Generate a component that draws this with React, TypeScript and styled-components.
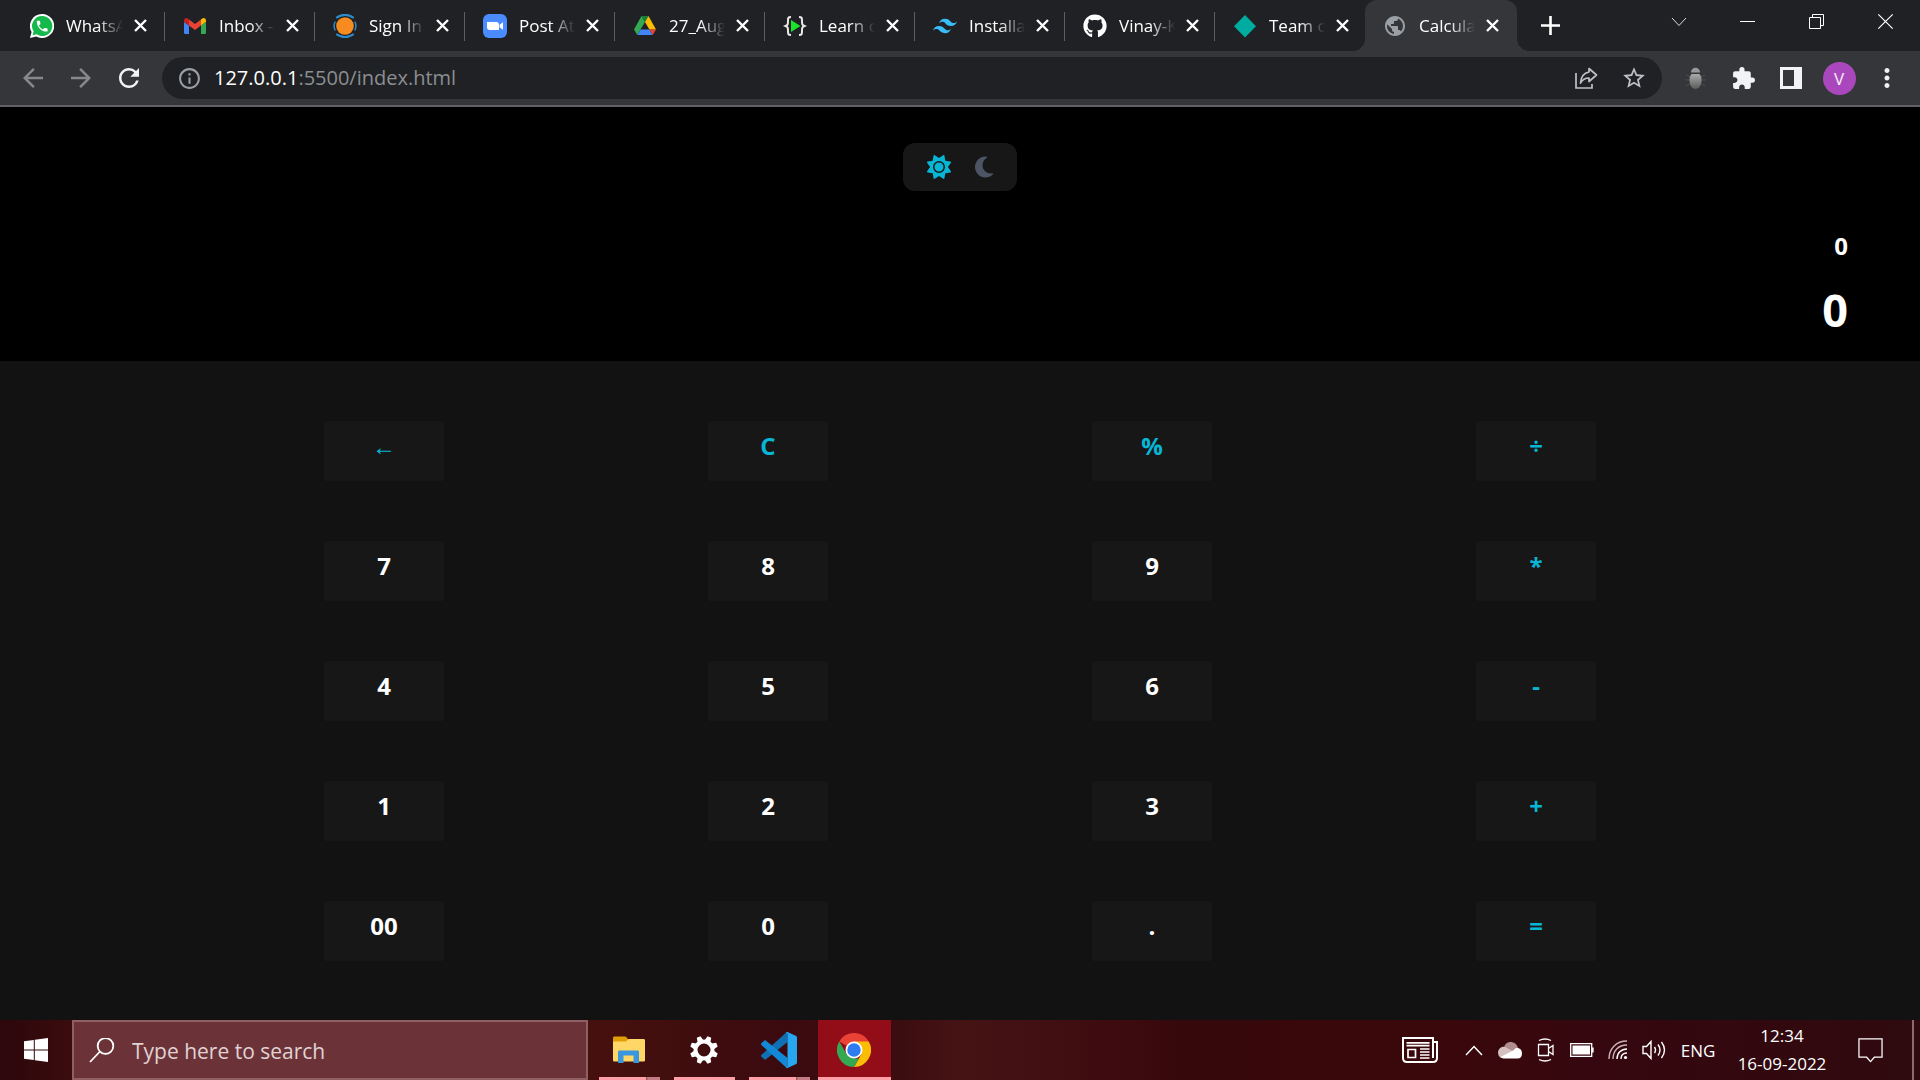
import React, { useState } from "react";
import styled, { createGlobalStyle, css } from "styled-components";
import { MdExtension, MdInfoOutline, MdPublic, MdRefresh, MdStarOutline, MdArrowBack, MdArrowForward, MdMoreVert } from "react-icons/md";
import { FaGithub, FaMoon, FaSun } from "react-icons/fa6";
import { SiTailwindcss } from "react-icons/si";

const uiFont = `"Segoe UI", "Open Sans", "Noto Sans", sans-serif`;

const GlobalStyle = createGlobalStyle`
  * { box-sizing: border-box; }
  body { margin: 0; background: #121212; font-family: ${uiFont}; color: #fff; }
  button, input { font: inherit; color: inherit; }
  svg { display: block; flex: none; }
`;

const Screen = styled.div`
  min-height: 100vh;
  display: flex;
  flex-direction: column;
`;

const iconButton = css`
  display: grid;
  place-items: center;
  flex: none;
  padding: 0;
  border: 0;
  background: none;
  cursor: pointer;
`;

/* ---------- browser tabs ---------- */

const TabStrip = styled.header`
  display: flex;
  height: 51px;
  padding-left: 15px;
  background: #202124;
`;

const Tab = styled.div<{ $active?: boolean; $divider?: boolean }>`
  position: relative;
  display: flex;
  align-items: center;
  width: ${(p) => (p.$active ? "152px" : "150px")};
  padding: 0 ${(p) => (p.$active ? "18px" : "16px")} 0 18px;
  background: ${(p) => (p.$active ? "#35363a" : "transparent")};
  border-radius: 12px 12px 0 0;
  ${(p) =>
    p.$divider &&
    css`
      &::after {
        content: "";
        position: absolute;
        right: 0;
        top: 12px;
        width: 1px;
        height: 29px;
        background: #5b5e63;
      }
    `}
  ${(p) =>
    p.$active &&
    css`
      &::before,
      &::after {
        content: "";
        position: absolute;
        bottom: 0;
        width: 12px;
        height: 12px;
      }
      &::before {
        right: 100%;
        background: radial-gradient(circle at 0 0, transparent 12px, #35363a 12px);
      }
      &::after {
        left: 100%;
        background: radial-gradient(circle at 100% 0, transparent 12px, #35363a 12px);
      }
    `}
  &:first-child {
    padding-left: 15px;
    padding-right: 18px;
  }
`;

const TabTitle = styled.span`
  flex: 1;
  min-width: 0;
  margin-left: 12px;
  overflow: hidden;
  white-space: nowrap;
  font-size: 17px;
  line-height: 24px;
  mask-image: linear-gradient(90deg, #000 55%, transparent 100%);
`;

const TabClose = styled.button`
  ${iconButton}
  width: 24px;
  height: 24px;
  margin-left: 5px;
  margin-right: -5px;
`;

const NewTab = styled.button`
  ${iconButton}
  width: 42px;
  height: 51px;
  margin-left: 12px;
`;

const WindowControls = styled.div`
  display: flex;
  margin-left: auto;
`;

const WindowButton = styled.button`
  ${iconButton}
  width: 69px;
  height: 43px;
`;

/* ---------- browser toolbar ---------- */

const Toolbar = styled.div`
  display: flex;
  align-items: center;
  height: 56px;
  padding: 0 9px 0 15px;
  background: #35363a;
  border-bottom: 2px solid #606164;
`;

const ToolButton = styled.button<{ $dim?: boolean }>`
  ${iconButton}
  width: 36px;
  height: 42px;
  color: ${(p) => (p.$dim ? "#87888b" : "#f1f3f4")};
`;

const NavGroup = styled.div`
  display: flex;
  gap: 12px;
  margin-right: 15px;
`;

const AddressBar = styled.div`
  flex: 1;
  display: flex;
  align-items: center;
  height: 42px;
  padding: 0 4px 0 15px;
  border-radius: 21px;
  background: #202124;
  color: #9aa0a6;
`;

const Address = styled.div`
  flex: 1;
  margin-left: 12px;
  font-size: 20px;
  line-height: 30px;
  color: #8b8e92;
  b {
    font-weight: 400;
    color: #fff;
  }
`;

const AddressButton = styled(ToolButton)`
  width: 48px;
  color: #bdc1c6;
`;

const Extensions = styled.div`
  display: flex;
  margin-left: 9px;
`;

const ExtensionButton = styled(ToolButton)`
  width: 48px;
`;

const Avatar = styled.span`
  display: grid;
  place-items: center;
  width: 33px;
  height: 33px;
  border-radius: 50%;
  background: #ab47bc;
  font-size: 17px;
`;

/* ---------- calculator ---------- */

const Calculator = styled.main`
  flex: 1;
  display: flex;
  flex-direction: column;
`;

const Display = styled.section`
  display: flex;
  flex-direction: column;
  padding: 36px 72px 24px;
  background: #000;
`;

const ThemeToggle = styled.div`
  align-self: center;
  display: flex;
  gap: 18px;
  padding: 9px 20px 9px 22px;
  border-radius: 12px;
  background: #171717;
`;

const ThemeButton = styled.button<{ $active: boolean }>`
  ${iconButton}
  width: 27px;
  height: 30px;
  color: ${(p) => (p.$active ? "#06b6d4" : "#4b5563")};
`;

const Output = styled.output<{ $large?: boolean }>`
  align-self: flex-end;
  margin-top: ${(p) => (p.$large ? "18px" : "36px")};
  font-weight: 700;
  font-size: ${(p) => (p.$large ? "45px" : "24px")};
  line-height: ${(p) => (p.$large ? "54px" : "38px")};
`;

const Keypad = styled.section`
  flex: 1;
  display: grid;
  grid-template-columns: repeat(4, 1fr);
  grid-auto-rows: 60px;
  row-gap: 60px;
  justify-items: center;
  padding: 60px 10% 59px;
  background: #121212;
`;

const Key = styled.button<{ $accent: boolean }>`
  width: 120px;
  padding: 0 0 11px;
  border: 0;
  border-radius: 2px;
  background: #171717;
  color: ${(p) => (p.$accent ? "#06b6d4" : "#fff")};
  font-size: 24px;
  font-weight: 700;
  line-height: 36px;
  cursor: pointer;
`;

/* ---------- taskbar ---------- */

const Taskbar = styled.footer`
  display: flex;
  height: 60px;
  background: linear-gradient(90deg, #2c070b 0, #3c0c0e 4%, #45100e 32%, #3a0a0f 41%, #3c0d10 47%, #451314 50%, #400d11 56%, #36080b 62%, #3a080b 74%, #35070f 85%, #2f0a0e 100%);
`;

const StartButton = styled.button`
  ${iconButton}
  width: 72px;
`;

const SearchBox = styled.label`
  display: flex;
  align-items: center;
  flex: 0 1 516px;
  padding: 2px 16px 0 15px;
  gap: 17px;
  border: 2px solid #8f5f64;
  background: #6b3338;
`;

const SearchInput = styled.input`
  flex: 1;
  min-width: 0;
  padding: 0;
  border: 0;
  outline: 0;
  background: none;
  font-size: 21px;
  line-height: 30px;
  &::placeholder {
    color: #e0d2d4;
    opacity: 1;
  }
`;

const Apps = styled.nav`
  display: flex;
  gap: 2px;
  margin-left: 5px;
`;

const TaskButton = styled.button<{ $active?: boolean; $stacked?: boolean }>`
  ${iconButton}
  position: relative;
  width: 73px;
  padding-right: 2px;
  background: ${(p) => (p.$active ? "#930d19" : "none")};
  &::after {
    content: "";
    position: absolute;
    bottom: 0;
    left: ${(p) => (p.$active ? "0" : "6px")};
    right: ${(p) => (p.$active ? "0" : "6px")};
    height: 3px;
    background: ${(p) => (p.$stacked ? "linear-gradient(90deg, #ff9fa8 47px, #8a4a50 47px, #c47c84 49px)" : "#ff9fa8")};
  }
`;

const Tray = styled.div`
  display: flex;
  align-items: center;
  margin-left: auto;
`;

const TrayButton = styled.button<{ $width?: number }>`
  ${iconButton}
  width: ${(p) => p.$width ?? 36}px;
  height: 60px;
`;

const Language = styled.button`
  ${iconButton}
  width: 52px;
  height: 60px;
  font-size: 17px;
`;

const Clock = styled.time`
  width: 92px;
  margin-left: 12px;
  text-align: center;
  white-space: nowrap;
  font-size: 17px;
  line-height: 28px;
`;

const ShowDesktop = styled.button`
  align-self: stretch;
  width: 8px;
  padding: 0;
  border: 0;
  border-left: 2px solid #8c6a6d;
  background: none;
`;

/* ---------- drawings ---------- */

const Cross = ({ size = 13, width = 2.4 }: { size?: number; width?: number }) => (
  <svg width={size} height={size} viewBox="0 0 13 13" fill="none" stroke="#fff" strokeWidth={width}>
    <path d="M1 1l11 11M12 1L1 12" />
  </svg>
);

const WhatsAppIcon = () => (
  <svg width="24" height="24" viewBox="0 0 24 24">
    <path fill="#fff" d="M12 0a12 12 0 0 0-10.4 18L0 24l6.200-1.600A12 12 0 1 0 12 0z" />
    <path fill="#14b84b" d="M12 2a10 10 0 0 0-8.400 15.300l-1 3.900 4-1A10 10 0 1 0 12 2z" />
    <path fill="#fff" transform="translate(5 5) scale(.6)" d="M6.620 10.790c1.440 2.830 3.760 5.140 6.590 6.590l2.200-2.200c.27-.27.67-.36 1.020-.24 1.120.37 2.330.57 3.570.57.55 0 1 .45 1 1V20c0 .55-.45 1-1 1-9.390 0-17-7.610-17-17 0-.55.45-1 1-1h3.500c.55 0 1 .45 1 1 0 1.250.2 2.450.57 3.570.11.35.03.74-.25 1.020l-2.200 2.200z" />
  </svg>
);

const GmailIcon = () => (
  <svg width="24" height="24" viewBox="0 0 24 24">
    <path fill="#4285f4" d="M1 8v10.400c0 .9.700 1.600 1.600 1.600H6V11.500z" />
    <path fill="#34a853" d="M23 8v10.400c0 .9-.7 1.600-1.600 1.600H18V11.500z" />
    <path fill="#ea4335" d="M6 5.500l6 4.600 6-4.600v6l-6 4.600-6-4.600z" />
    <path fill="#c5221f" d="M1 6.500C1 4.300 3.400 3.400 5 4.700l1 .8v6L1 7.800z" />
    <path fill="#fbbc04" d="M23 6.500c0-2.200-2.400-3.100-4-1.800l-1 .8v6l5-3.700z" />
  </svg>
);

const SignInIcon = () => (
  <svg width="24" height="24" viewBox="0 0 24 24" fill="none" stroke="#2d8bcb" strokeWidth="2.200">
    <circle cx="12" cy="12" r="8.800" fill="#f68b1f" stroke="none" />
    <path d="M3.200 3.800Q12-2 20.800 3.800M3.200 20.200Q12 26 20.800 20.200" />
    <path strokeWidth="1.500" d="M2.200 7.500Q0 12 2.200 16.500M21.800 7.500Q24 12 21.800 16.500" />
  </svg>
);

const ZoomIcon = () => (
  <svg width="24" height="24" viewBox="0 0 24 24">
    <rect width="24" height="24" rx="6" fill="#4a8cff" />
    <path fill="#fff" d="M4 8h9.500c1.400 0 2.500 1 2.500 2.400V16H6.500C5.100 16 4 15 4 13.600zM16.600 10.800L20 8.200v7.600l-3.400-2.600z" />
  </svg>
);

const DriveIcon = () => (
  <svg width="24" height="24" viewBox="0 0 24 24">
    <path fill="#34a853" d="M8.500 2L1 15.500 4.300 21 12 8z" />
    <path fill="#188038" d="M8.500 2h7L12 8z" />
    <path fill="#fbbc04" d="M15.500 2L23 15.500h-6.600L12 8z" />
    <path fill="#4285f4" d="M7.700 15.500h8.700L19.700 21H4.300z" />
    <path fill="#ea4335" d="M16.400 15.500H23L19.700 21z" />
  </svg>
);

const CodeIcon = () => (
  <svg width="24" height="24" viewBox="0 0 24 24">
    <path fill="none" stroke="#e8e8e8" strokeWidth="2" d="M8 3C5 3 5 4 5 7s0 4-2.500 5C5 13 5 14 5 17s0 4 3 4M16 3c3 0 3 1 3 4s0 4 2.500 5C19 13 19 14 19 17s0 4-3 4" />
    <path fill="#19e42b" d="M8 6l9.500 6L8 18z" />
  </svg>
);

const DiamondIcon = () => (
  <svg width="24" height="24" viewBox="0 0 24 24">
    <path fill="#00ac9f" d="M12 1l11 11.300L12 23.500 1 12.300z" />
  </svg>
);

const ShareIcon = () => (
  <svg width="24" height="24" viewBox="0 0 24 24" fill="none" stroke="currentColor" strokeWidth="1.700">
    <path d="M2 7v15h16v-4" />
    <path strokeLinejoin="round" d="M15 2.500L22.500 9 15 15.500V12c-4 0-6.500 1.500-8.500 5 .4-5.500 3-10 8.500-11z" />
  </svg>
);

const BugIcon = () => (
  <svg width="21" height="24" viewBox="0 0 21 24">
    <defs>
      <linearGradient id="bug" x2="0" y2="1">
        <stop stopColor="#aaa" />
        <stop offset="1" stopColor="#5b5b5b" />
      </linearGradient>
    </defs>
    <path stroke="#4d4e51" d="M1 9l5 2M0 14h6M1 20l5-3M20 9l-5 2M21 14h-6M20 20l-5-3" />
    <path fill="#999" d="M6 6.500c0-6.500 9-6.500 9 0z" />
    <path fill="url(#bug)" d="M6.500 8h8q2 2 2 6c0 12-12 12-12 0q0-4 2-6z" />
  </svg>
);

const PanelIcon = () => (
  <svg width="22" height="22" viewBox="0 0 22 22">
    <path fill="#f1f3f4" fillRule="evenodd" d="M0 0h22v22H0zM3 3v16h11V3z" />
  </svg>
);

const SearchIcon = () => (
  <svg width="26" height="26" viewBox="0 0 26 26" fill="none" stroke="#fff" strokeWidth="1.800">
    <circle cx="16.500" cy="8" r="7.800" />
    <path d="M11 13.500L1 24" />
  </svg>
);

const WindowsIcon = () => (
  <svg width="24" height="24" viewBox="0 0 24 24" fill="#fff">
    <path d="M0 3.300L9.800 2v9.500H0zM10.800 1.800L24 0v11.500H10.800zM0 12.500h9.800V22L0 20.700zM10.800 12.500H24V24l-13.200-1.800z" />
  </svg>
);

const FolderIcon = () => (
  <svg width="32" height="28" viewBox="0 0 32 28">
    <path fill="#e09f06" d="M0 2c0-1 .6-1.500 1.500-1.500h11L15 3v4H0z" />
    <path fill="#ffd766" d="M0 5.500h13L15.500 3H30.500c1 0 1.500.5 1.500 1.500V24c0 1-.5 1.500-1.500 1.500h-29C.5 25.500 0 25 0 24z" />
    <path fill="#3b97dd" d="M5 27V16c0-1 .7-1.500 1.500-1.500h18c1 0 1.500.6 1.500 1.500v11h-5.500v-7.500h-10V27z" />
  </svg>
);

const GearIcon = () => (
  <svg width="28" height="28" viewBox="-14 -14 28 28">
    <circle r="8.500" fill="none" stroke="#fff" strokeWidth="4" />
    {Array.from({ length: 8 }, (_, i) => (
      <path key={i} fill="#fff" transform={`rotate(${i * 45 + 22.5})`} d="M-3-9.500L-2-14H2L3-9.500z" />
    ))}
  </svg>
);

const CodeEditorIcon = () => (
  <svg width="36" height="36" viewBox="0 0 36 36">
    <path fill="#0f70b3" d="M26.500 0v10L5 27.300c-.6.500-1.300.5-1.800 0L.6 25c-.8-.7-.8-1.500 0-2.200L24.600.9z" />
    <path fill="#1189d6" d="M26.500 36V26L5 8.700c-.6-.5-1.300-.5-1.800 0L.6 11c-.8.7-.8 1.500 0 2.200l24 21.900z" />
    <path fill="#27a7f0" d="M26.500 0L34.700 3.700c.8.400 1.300 1 1.300 2v24.600c0 1-.5 1.600-1.300 2L26.500 36c-.8.200-1.500-.1-2-.9.900.5 2-.1 2-1.100V2c0-1-1.100-1.600-2-1.100.5-.8 1.200-1.100 2-.9z" />
  </svg>
);

const ChromeIcon = () => (
  <svg width="34" height="34" viewBox="0 0 48 48">
    <path fill="#ea4335" d="M24 24L3.200 12A24 24 0 0 1 44.800 12z" />
    <path fill="#fbbc04" d="M24 12h20.800A24 24 0 0 1 24 48l10.400-18z" />
    <path fill="#34a853" d="M3.200 12l10.400 18L24 36h7L24 48A24 24 0 0 1 3.200 12z" />
    <circle cx="24" cy="24" r="12" fill="#fff" />
    <circle cx="24" cy="24" r="9.500" fill="#2f7cf0" />
  </svg>
);

const NewsIcon = () => (
  <svg width="36" height="26" viewBox="0 0 36 26" fill="none" stroke="#fff" strokeWidth="2">
    <path d="M31 20V1H1v20q0 4 4 4h26q4 0 4-4V5h-4M31 5v16" />
    <path strokeWidth="1.700" d="M4.500 5.800h23M4.500 8.600h23M18 12h9.500M18 15h9.500M18 18h9.500M18 21h9.500M6 12.500h7.500v8H6z" />
  </svg>
);

const CloudIcon = () => (
  <svg width="24" height="18" viewBox="0 0 24 18">
    <path fill="#b08d8f" d="M6 7c1-8 12-8 14 0l-6 4z" />
    <path fill="#d5c0c1" d="M0 12c0-5 5-8 9-5l9 5-15 5q-3-2-3-5z" />
    <path fill="#fff" d="M2.500 16L15 9.500l3-2.500c4-.5 6 2 6 5.500 0 3-1.500 5-4.500 5H5z" />
  </svg>
);

const MeetIcon = () => (
  <svg width="18" height="24" viewBox="0 0 18 24" fill="none" stroke="#fff" strokeWidth="1.300">
    <path d="M1.500 6.500h10v11h-10zM11.500 10.500l4.500-3v9l-4.500-3M2 2.500q6-3 12 0M2 21.500q6 3 12 0" />
  </svg>
);

const BatteryIcon = () => (
  <svg width="24" height="14" viewBox="0 0 24 14">
    <path fill="none" stroke="#fff" strokeWidth="1.300" d="M.7.700h21v12.600h-21zM23 4.500v5" />
    <path fill="#fff" d="M2.500 2.500H20v9H2.500z" />
  </svg>
);

const WifiIcon = () => (
  <svg width="20" height="20" viewBox="0 0 20 20" fill="none" stroke="#fff" strokeWidth="1.400">
    <path stroke="#c9b2b4" d="M1 19C1 9 8 1 19 1M5 19C5 11 10 5 19 5" />
    <path d="M9 19c0-6 4-10 10-10M13 19c0-4 2-6 6-6" />
    <circle cx="17.500" cy="17.500" r="1.600" fill="#fff" stroke="none" />
  </svg>
);

const VolumeIcon = () => (
  <svg width="24" height="20" viewBox="0 0 24 20" fill="none" stroke="#fff" strokeWidth="1.400">
    <path d="M1 6.500h3.500L9 1.500v17l-4.500-5H1zM12.500 7q2 3 0 6M16 4.500q4 5.500 0 11M19.500 2q6 8 0 16" />
  </svg>
);

const NotificationIcon = () => (
  <svg width="25" height="25" viewBox="0 0 26 26" fill="none" stroke="#fff" strokeWidth="1.300">
    <path d="M1 1h24v19h-8l-4 4.500L9 20H1z" />
  </svg>
);

/* ---------- page ---------- */

const tabs = [
  { title: "WhatsApp", icon: <WhatsAppIcon /> },
  { title: "Inbox - Gmail", icon: <GmailIcon /> },
  { title: "Sign In", icon: <SignInIcon /> },
  { title: "Post Attendee", icon: <ZoomIcon /> },
  { title: "27_August", icon: <DriveIcon /> },
  { title: "Learn coding", icon: <CodeIcon /> },
  { title: "Installation", icon: <SiTailwindcss size={24} color="#38bdf8" /> },
  { title: "Vinay-Kumar", icon: <FaGithub size={24} /> },
  { title: "Team code", icon: <DiamondIcon /> },
  { title: "Calculator", icon: <MdPublic size={24} color="#9aa0a6" /> },
];

const keys = ["←", "C", "%", "÷", "7", "8", "9", "*", "4", "5", "6", "-", "1", "2", "3", "+", "00", "0", ".", "="];
const accents = "←C%÷*-+=";

export default function App() {
  const [dark, setDark] = useState(true);
  return (
    <Screen>
      <GlobalStyle />
      <TabStrip>
        {tabs.map((tab, i) => (
          <Tab key={tab.title} $active={i === tabs.length - 1} $divider={i < tabs.length - 2}>
            {tab.icon}
            <TabTitle>{tab.title}</TabTitle>
            <TabClose aria-label="Close tab">
              <Cross />
            </TabClose>
          </Tab>
        ))}
        <NewTab aria-label="New tab">
          <svg width="19" height="19" viewBox="0 0 19 19" stroke="#fff" strokeWidth="2.600">
            <path d="M9.500 0v19M0 9.500h19" />
          </svg>
        </NewTab>
        <WindowControls>
          <WindowButton aria-label="Search tabs">
            <svg width="16" height="10" viewBox="0 0 16 10" fill="none" stroke="#ddd" strokeWidth="1">
              <path d="M1 1l7 7.500L15 1" />
            </svg>
          </WindowButton>
          <WindowButton aria-label="Minimize">
            <svg width="15" height="1" viewBox="0 0 15 1">
              <path fill="#fff" d="M0 0h15v1H0z" />
            </svg>
          </WindowButton>
          <WindowButton aria-label="Restore">
            <svg width="15" height="15" viewBox="0 0 15 15" fill="none" stroke="#fff">
              <path d="M.5 3.500h11v11H.5zM3.500 3.500v-3h11v11h-3" />
            </svg>
          </WindowButton>
          <WindowButton aria-label="Close window">
            <Cross size={17} width={0.9} />
          </WindowButton>
        </WindowControls>
      </TabStrip>

      <Toolbar>
        <NavGroup>
          <ToolButton $dim aria-label="Back">
            <MdArrowBack size={30} />
          </ToolButton>
          <ToolButton $dim aria-label="Forward">
            <MdArrowForward size={30} />
          </ToolButton>
          <ToolButton aria-label="Reload">
            <MdRefresh size={30} />
          </ToolButton>
        </NavGroup>
        <AddressBar>
          <MdInfoOutline size={25} />
          <Address>
            <b>127.0.0.1</b>:5500/index.html
          </Address>
          <AddressButton aria-label="Share">
            <ShareIcon />
          </AddressButton>
          <AddressButton aria-label="Bookmark">
            <MdStarOutline size={26} />
          </AddressButton>
        </AddressBar>
        <Extensions>
          <ExtensionButton aria-label="Debugger">
            <BugIcon />
          </ExtensionButton>
          <ExtensionButton aria-label="Extensions">
            <MdExtension size={25} />
          </ExtensionButton>
          <ExtensionButton aria-label="Side panel">
            <PanelIcon />
          </ExtensionButton>
          <ExtensionButton aria-label="Profile">
            <Avatar>V</Avatar>
          </ExtensionButton>
          <ExtensionButton aria-label="Menu">
            <MdMoreVert size={30} />
          </ExtensionButton>
        </Extensions>
      </Toolbar>

      <Calculator>
        <Display>
          <ThemeToggle>
            <ThemeButton $active={dark} aria-label="Light theme" onClick={() => setDark(true)}>
              <FaSun size={24} />
            </ThemeButton>
            <ThemeButton $active={!dark} aria-label="Dark theme" onClick={() => setDark(false)}>
              <FaMoon size={24} />
            </ThemeButton>
          </ThemeToggle>
          <Output>0</Output>
          <Output $large>0</Output>
        </Display>
        <Keypad>
          {keys.map((k) => (
            <Key key={k} $accent={accents.includes(k)}>
              {k}
            </Key>
          ))}
        </Keypad>
      </Calculator>

      <Taskbar>
        <StartButton aria-label="Start">
          <WindowsIcon />
        </StartButton>
        <SearchBox>
          <SearchIcon />
          <SearchInput type="text" aria-label="Search" placeholder="Type here to search" />
        </SearchBox>
        <Apps>
          <TaskButton $stacked aria-label="File Explorer">
            <FolderIcon />
          </TaskButton>
          <TaskButton aria-label="Settings">
            <GearIcon />
          </TaskButton>
          <TaskButton $stacked aria-label="Code editor">
            <CodeEditorIcon />
          </TaskButton>
          <TaskButton $active aria-label="Chrome">
            <ChromeIcon />
          </TaskButton>
        </Apps>
        <Tray>
          <TrayButton $width={72} aria-label="News">
            <NewsIcon />
          </TrayButton>
          <TrayButton aria-label="Show hidden icons">
            <svg width="18" height="11" viewBox="0 0 18 11" fill="none" stroke="#fff" strokeWidth="1.500">
              <path d="M1 10l8-8.500L17 10" />
            </svg>
          </TrayButton>
          <TrayButton aria-label="OneDrive">
            <CloudIcon />
          </TrayButton>
          <TrayButton aria-label="Meet Now">
            <MeetIcon />
          </TrayButton>
          <TrayButton aria-label="Battery">
            <BatteryIcon />
          </TrayButton>
          <TrayButton aria-label="Network">
            <WifiIcon />
          </TrayButton>
          <TrayButton aria-label="Volume">
            <VolumeIcon />
          </TrayButton>
          <Language>ENG</Language>
          <Clock>
            12:34
            <br />
            16-09-2022
          </Clock>
          <TrayButton $width={84} aria-label="Notifications">
            <NotificationIcon />
          </TrayButton>
          <ShowDesktop aria-label="Show desktop" />
        </Tray>
      </Taskbar>
    </Screen>
  );
}
